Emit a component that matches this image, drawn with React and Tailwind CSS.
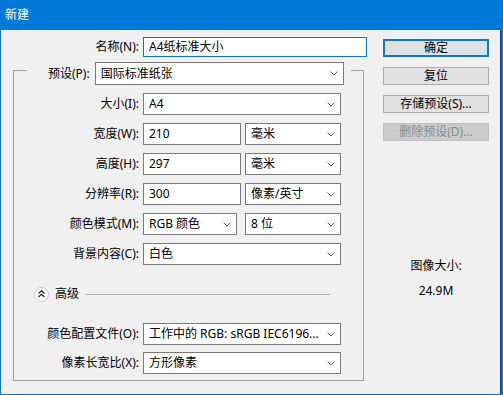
import React from "react";

const Chevron = () => (
  <svg width="8" height="5" viewBox="0 0 8 5" className="shrink-0">
    <polyline points="0.5,0.5 4,4 7.5,0.5" fill="none" stroke="#606060" strokeWidth="1" />
  </svg>
);

function Select({ value, className = "" }) {
  return (
    <div className={`h-[22px] flex items-center justify-between bg-white border border-[#7a7a7a] pl-[5px] pr-[5px] ${className}`}>
      <span className="whitespace-nowrap">{value}</span>
      <Chevron />
    </div>
  );
}

function Input({ value, className = "" }) {
  return (
    <div className={`h-[22px] flex items-center bg-white border border-[#7a7a7a] pl-[5px] ${className}`}>
      {value}
    </div>
  );
}

function Row({ label, children }) {
  return (
    <div className="flex items-center h-[22px]">
      <div className="w-[125px] text-right whitespace-nowrap">{label}</div>
      <div className="ml-[4px] flex gap-[4px]">{children}</div>
    </div>
  );
}

function Button({ children, focused, disabled }) {
  const style = disabled
    ? "bg-[#cccccc] border border-[#bfbfbf] text-[#8a8a8a]"
    : focused
    ? "bg-[#e1e1e1] border-2 border-[#0078d7]"
    : "bg-[#e1e1e1] border border-[#adadad]";
  return (
    <div className={`h-[18px] w-[106px] flex items-center justify-center ${style}`}>
      {children}
    </div>
  );
}

export default function App() {
  return (
    <div className="w-[503px] h-[395px] flex flex-col bg-[#0078d7] font-['Noto_Sans','Noto_Sans_CJK_SC',sans-serif] text-[12px] leading-[16px] text-black">
      {/* Title bar */}
      <div className="h-[30px] shrink-0 flex items-center pl-[5px] text-white">新建</div>

      {/* Body */}
      <div className="flex-1 flex ml-[1px] mb-[1px] mr-[2px] bg-[#f0f0f0] border-r border-[#1f3b57]">
        {/* Left column */}
        <div className="w-[370px] pt-[7px] flex flex-col">
          <div className="flex items-center h-[20px]">
            <div className="w-[138px] text-right">名称(N):</div>
            <div className="ml-[4px] w-[224px] h-[20px] flex items-center bg-white border border-[#0078d7] pl-[5px]">
              A4纸标准大小
            </div>
          </div>

          {/* Group box */}
          <div className="mt-[13px] ml-[12px] w-[351px] border border-[#a0a0a0] flex flex-col pb-[6px]">
            <div className="-mt-[9px] ml-[13px] w-fit flex items-center bg-[#f0f0f0] pl-[21px] pr-[7px] h-[23px]">
              <span>预设(P):</span>
              <Select value="国际标准纸张" className="ml-[5px] w-[249px] h-[23px]" />
            </div>

            <div className="mt-[8px] flex flex-col gap-[8px]">
              <Row label="大小(I):">
                <Select value="A4" className="w-[198px]" />
              </Row>
              <Row label="宽度(W):">
                <Input value="210" className="w-[98px]" />
                <Select value="毫米" className="w-[96px]" />
              </Row>
              <Row label="高度(H):">
                <Input value="297" className="w-[98px]" />
                <Select value="毫米" className="w-[96px]" />
              </Row>
              <Row label="分辨率(R):">
                <Input value="300" className="w-[98px]" />
                <Select value="像素/英寸" className="w-[96px]" />
              </Row>
              <Row label="颜色模式(M):">
                <Select value="RGB 颜色" className="w-[94px] mr-[4px]" />
                <Select value="8 位" className="w-[96px]" />
              </Row>
              <Row label="背景内容(C):">
                <Select value="白色" className="w-[198px]" />
              </Row>
            </div>

            {/* Advanced */}
            <div className="mt-[21px] h-[16px] flex items-center pl-[20px]">
              <div className="w-[15px] h-[15px] rounded-full bg-white border border-[#c8c8c8] flex items-center justify-center">
                <svg width="7" height="8" viewBox="0 0 7 8">
                  <polyline points="0.5,3.5 3.5,0.8 6.5,3.5" fill="none" stroke="#222" strokeWidth="1.2" />
                  <polyline points="0.5,7 3.5,4.3 6.5,7" fill="none" stroke="#222" strokeWidth="1.2" />
                </svg>
              </div>
              <span className="ml-[6px]">高级</span>
              <div className="ml-[6px] w-[245px] h-px bg-[#b4b4b4]" />
            </div>

            <div className="mt-[21px] flex flex-col gap-[7px]">
              <Row label="颜色配置文件(O):">
                <Select value="工作中的 RGB: sRGB IEC6196..." className="w-[198px]" />
              </Row>
              <Row label="像素长宽比(X):">
                <Select value="方形像素" className="w-[198px]" />
              </Row>
            </div>
          </div>
        </div>

        {/* Right column */}
        <div className="ml-[12px] pt-[9px] flex flex-col">
          <div className="flex flex-col gap-[10px]">
            <Button focused>确定</Button>
            <Button>复位</Button>
            <Button>存储预设(S)...</Button>
            <Button disabled>删除预设(D)...</Button>
          </div>
          <div className="mt-[117px] text-center">图像大小:</div>
          <div className="mt-[9px] text-center">24.9M</div>
        </div>
      </div>
    </div>
  );
}
